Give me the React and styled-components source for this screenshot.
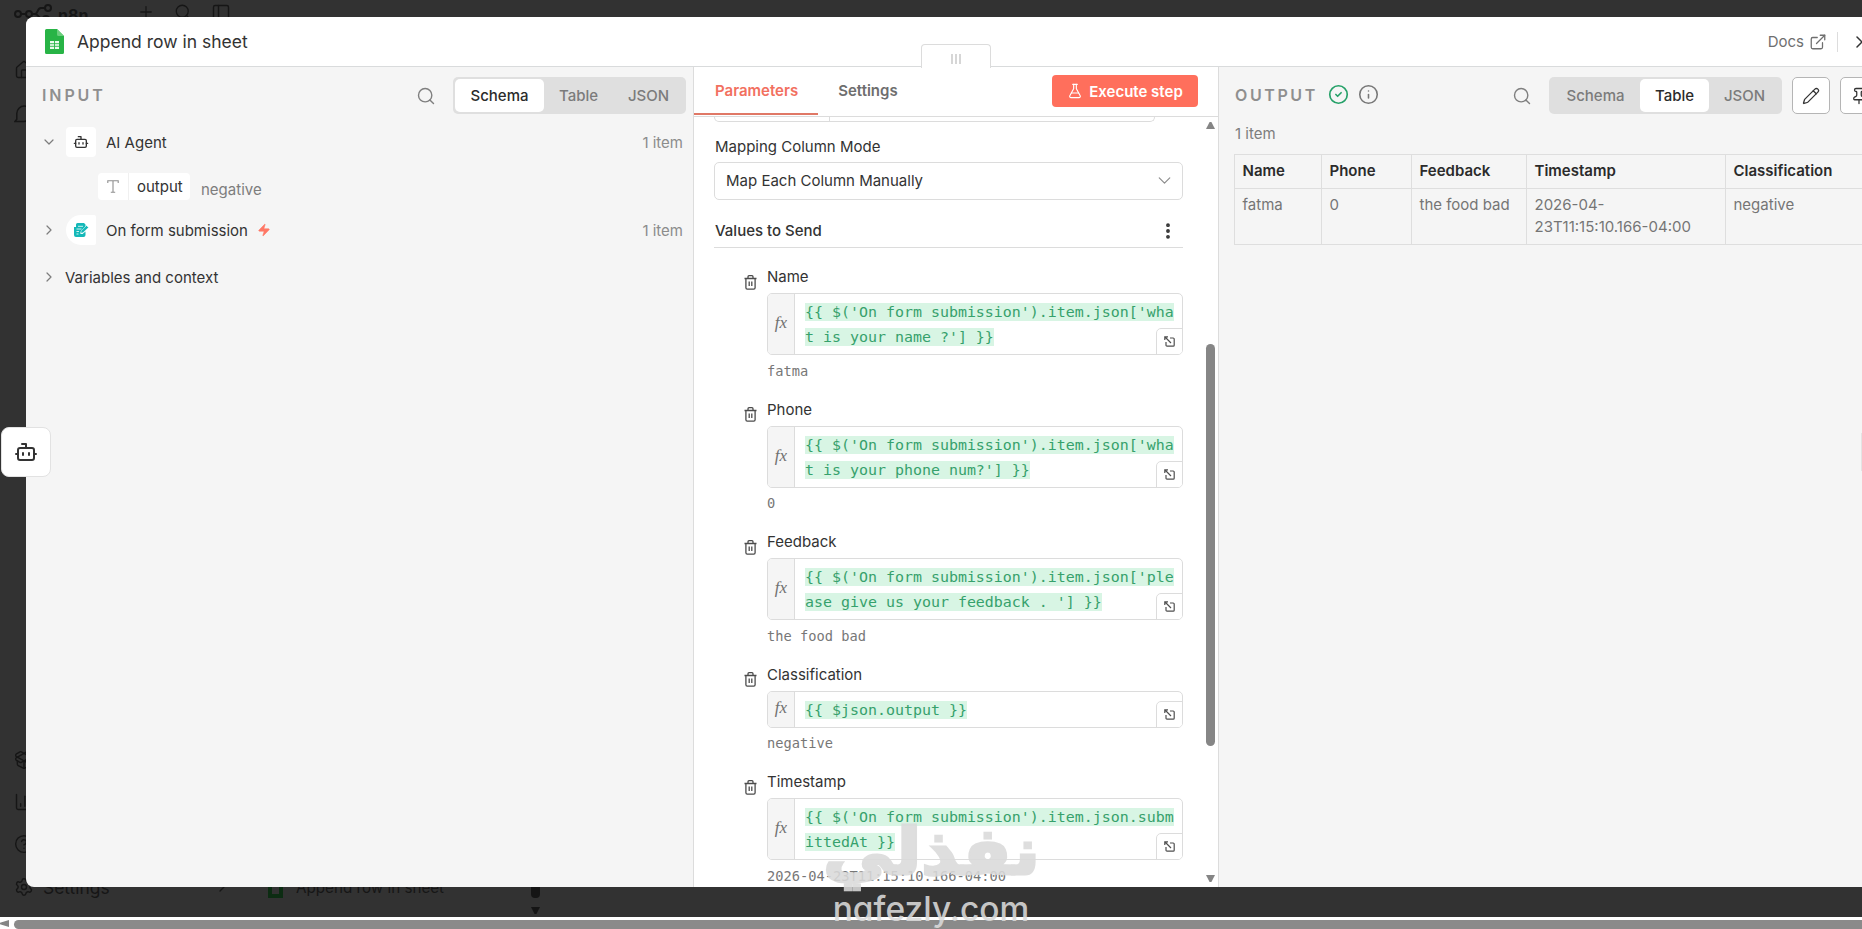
import React from "react";
import styled, { createGlobalStyle, css } from "styled-components";
import {
  Bot,
  ChartColumn,
  ChevronDown,
  ChevronRight,
  CircleCheck,
  CircleHelp,
  EllipsisVertical,
  ExternalLink,
  FlaskConical,
  House,
  Info,
  PackageOpen,
  PanelLeft,
  Pencil,
  Pin,
  Plus,
  Search,
  Settings,
  X,
  Zap,
} from "lucide-react";

const fields = [
  {
    name: "Name",
    lines: ["{{ $('On form submission').item.json['wha", "t is your name ?'] }}"],
    result: "fatma",
  },
  {
    name: "Phone",
    lines: ["{{ $('On form submission').item.json['wha", "t is your phone num?'] }}"],
    result: "0",
  },
  {
    name: "Feedback",
    lines: ["{{ $('On form submission').item.json['ple", "ase give us your feedback . '] }}"],
    result: "the food bad",
  },
  {
    name: "Classification",
    lines: ["{{ $json.output }}"],
    result: "negative",
  },
  {
    name: "Timestamp",
    lines: ["{{ $('On form submission').item.json.subm", "ittedAt }}"],
    result: "2026-04-23T11:15:10.166-04:00",
  },
];

const columns = [
  { title: "Name", value: "fatma", width: 87 },
  { title: "Phone", value: "0", width: 90 },
  { title: "Feedback", value: "the food bad", width: 115 },
  { title: "Timestamp", value: "2026-04-23T11:15:10.166-04:00", width: 199 },
  { title: "Classification", value: "negative", width: 150 },
];

function SheetIcon() {
  return (
    <svg width="19" height="25" viewBox="0 0 19 25">
      <path d="M1.5 0h10.500l7 7v16.500a1.500 1.500 0 0 1-1.500 1.500h-16A1.500 1.500 0 0 1 0 23.500v-22A1.500 1.500 0 0 1 1.500 0z" fill="#28b446" />
      <path d="M12 0l7 7h-5.500a1.500 1.500 0 0 1-1.500-1.500z" fill="#6ace7c" />
      <path d="M5 12h9v8H5z" fill="#eafaec" />
      <path d="M5 14.700h9M5 17.300h9M9.500 12v8" stroke="#28b446" strokeWidth="0.9" />
    </svg>
  );
}

function FormIcon() {
  return (
    <svg width="15" height="14" viewBox="0 0 15 14">
      <path d="M3.500 0H10l1.500 1.500v3L6.500 9.500V11h2l3-2.500V12a2 2 0 0 1-2 2H2a2 2 0 0 1-2-2V4h2V1.500A1.500 1.500 0 0 1 3.500 0z" fill="#14b8b8" />
      <path d="M4 3.300h5M2.500 6h5M2.500 8.500h2.500M2.500 11h2" stroke="#fff" strokeWidth="0.8" />
      <path d="M12.500 2.500l2 2L9 9.800l-2.200.4.300-2.200z" fill="#14b8b8" stroke="#fff" strokeWidth="0.5" />
    </svg>
  );
}

function TypeIcon() {
  return (
    <svg width="12" height="13" viewBox="0 0 12 13" fill="none" stroke="#8f8f8f" strokeWidth="1.1">
      <path d="M0.800 3V0.800h10.400V3M6 0.800v11.400M3.800 12.200h4.400" />
    </svg>
  );
}

function TrashIcon() {
  return (
    <svg width="13" height="15" viewBox="0 0 13 15" fill="none" stroke="#4c4c4c" strokeWidth="1.3">
      <path d="M0.500 3.500h12M4 3.300V1.700a1 1 0 0 1 1-1h3a1 1 0 0 1 1 1v1.600M1.900 3.500v9.300a1.300 1.300 0 0 0 1.300 1.300h6.600a1.300 1.300 0 0 0 1.300-1.300V3.500M5.200 6.500v4.500M7.800 6.500v4.500" />
    </svg>
  );
}

function ExpandIcon() {
  return (
    <svg width="11" height="11" viewBox="0 0 11 11" fill="none" stroke="#4f4f4f" strokeWidth="1.2">
      <path d="M6 2h3.200a1 1 0 0 1 1 1v6.200a1 1 0 0 1-1 1H3a1 1 0 0 1-1-1V6M0.800 4V0.800H4M1 1l6 6" />
    </svg>
  );
}

function ChatIcon() {
  return (
    <svg width="19" height="18" viewBox="0 0 19 18" fill="none" stroke="currentColor" strokeWidth="1.5">
      <path d="M1 16.500l1.800-2.300V8.500a7.500 7.500 0 0 1 15 0 7.800 7.800 0 0 1-7.800 8z" />
    </svg>
  );
}

function LogoIcon() {
  return (
    <svg width="40" height="18" viewBox="0 0 40 18" fill="none" stroke="#161616" strokeWidth="2">
      <circle cx="4" cy="10" r="3" />
      <circle cx="15" cy="10" r="3" />
      <circle cx="34" cy="4" r="3" />
      <circle cx="32" cy="15" r="3" />
      <path d="M7 10h5M18 10h3c3 0 2-6 6-6h4M21 10c4 0 3 5 8 5" />
    </svg>
  );
}

function Field({ name, lines, result }) {
  return (
    <FieldRow>
      <TrashIcon />
      <FieldBody>
        <FieldLabel>{name}</FieldLabel>
        <Expression>
          <FxBadge>fx</FxBadge>
          <Code>
            {lines.map((line) => (
              <CodeLine key={line}>
                <Mark>{line}</Mark>
              </CodeLine>
            ))}
          </Code>
          <ExpandButton>
            <ExpandIcon />
          </ExpandButton>
        </Expression>
        <Result>{result}</Result>
      </FieldBody>
    </FieldRow>
  );
}

function Views({ active }) {
  return (
    <Segmented>
      {["Schema", "Table", "JSON"].map((view) => (
        <Segment key={view} $active={view === active} $view={view}>
          {view}
        </Segment>
      ))}
    </Segmented>
  );
}

export default function App() {
  return (
    <Page>
      <GlobalStyle />
      <Backdrop>
        <TopBar>
          <LogoIcon />
          <Brand>n8n</Brand>
          <TopIcons>
            <Plus size={18} strokeWidth={1.7} />
            <Search size={18} strokeWidth={1.7} />
            <PanelLeft size={20} strokeWidth={1.7} />
          </TopIcons>
        </TopBar>
        <NavIcons>
          <House size={20} strokeWidth={1.7} />
          <ChatIcon />
        </NavIcons>
        <NavFooter>
          <PackageOpen size={20} strokeWidth={1.7} />
          <ChartColumn size={20} strokeWidth={1.7} />
          <CircleHelp size={20} strokeWidth={1.7} />
          <SettingsRow>
            <Settings size={20} strokeWidth={1.7} />
            <SettingsText>Settings</SettingsText>
            <ChevronRight size={16} />
            <DimSheet />
            <DimTitle>Append row in sheet</DimTitle>
            <DimScroll>
              <DimThumb />
              <Arrow $down $color="#151515" />
            </DimScroll>
          </SettingsRow>
        </NavFooter>
      </Backdrop>

      <Modal>
        <Header>
          <SheetIcon />
          <Title>Append row in sheet</Title>
          <Docs>
            Docs
            <ExternalLink size={18} strokeWidth={1.7} />
          </Docs>
          <HeaderLine />
          <X size={20} color="#333" strokeWidth={1.8} />
        </Header>
        <Panels>
          <InputPanel>
            <PanelBar>
              <PanelTitle>INPUT</PanelTitle>
              <Search size={20} color="#7f7f7f" strokeWidth={1.7} />
              <Views active="Schema" />
            </PanelBar>
            <Node $top={13}>
              <ChevronDown size={16} color="#7d7d7d" strokeWidth={1.8} />
              <NodeIcon>
                <Bot size={16} color="#333" strokeWidth={2} />
              </NodeIcon>
              <NodeName>AI Agent</NodeName>
              <Count>1 item</Count>
            </Node>
            <OutputRow>
              <Pill>
                <PillType>
                  <TypeIcon />
                </PillType>
                <PillName>output</PillName>
              </Pill>
              <PillValue>negative</PillValue>
            </OutputRow>
            <Node $top={14}>
              <ChevronRight size={16} color="#7d7d7d" strokeWidth={1.8} />
              <NodeIcon $trigger>
                <FormIcon />
              </NodeIcon>
              <NodeName>On form submission</NodeName>
              <Zap size={14} fill="#ff7866" color="#ff7866" strokeWidth={1} />
              <Count>1 item</Count>
            </Node>
            <Node $top={17}>
              <ChevronRight size={16} color="#7d7d7d" strokeWidth={1.8} />
              <ContextName>Variables and context</ContextName>
            </Node>
          </InputPanel>

          <MainPanel>
            <Grip>
              <GripLine />
              <GripLine />
              <GripLine />
            </Grip>
            <Tabs>
              <Tab $active>Parameters</Tab>
              <Tab>Settings</Tab>
              <Execute>
                <FlaskConical size={16} strokeWidth={1.7} />
                Execute step
              </Execute>
            </Tabs>
            <Scroller>
              <Form>
                <CutField>
                  <CutPart />
                </CutField>
                <ModeLabel>Mapping Column Mode</ModeLabel>
                <Select>
                  <span>Map Each Column Manually</span>
                  <ChevronDown size={21} color="#8d8d8d" strokeWidth={1.4} />
                </Select>
                <SectionTitle>
                  Values to Send
                  <EllipsisVertical size={20} strokeWidth={2.6} />
                </SectionTitle>
                <Fields>
                  {fields.map((field) => (
                    <Field key={field.name} {...field} />
                  ))}
                </Fields>
              </Form>
              <ScrollTrack>
                <Arrow $color="#858585" />
                <ScrollThumb />
                <Arrow $down $color="#858585" />
              </ScrollTrack>
            </Scroller>
          </MainPanel>

          <OutputPanel>
            <PanelBar>
              <PanelTitle $output>OUTPUT</PanelTitle>
              <Search size={20} color="#7f7f7f" strokeWidth={1.7} />
              <Status>
                <CircleCheck size={21} color="#26a169" strokeWidth={1.9} />
                <Info size={21} color="#777" strokeWidth={1.8} />
              </Status>
              <Views active="Table" />
              <IconButton>
                <Pencil size={18} strokeWidth={1.7} />
              </IconButton>
              <IconButton>
                <Pin size={18} strokeWidth={1.7} />
              </IconButton>
            </PanelBar>
            <OutputCount>1 item</OutputCount>
            <Table>
              {columns.map((column) => (
                <Column key={column.title} $width={column.width}>
                  <HeadCell>{column.title}</HeadCell>
                  <Cell>{column.value}</Cell>
                </Column>
              ))}
            </Table>
          </OutputPanel>
        </Panels>
      </Modal>

      <FloatingNode>
        <Bot size={24} strokeWidth={2} />
      </FloatingNode>
      <NextNode />

      <BottomScroll>
        <Arrow $left $color="#858585" />
        <BottomThumb />
      </BottomScroll>

      <Watermark>
        <WatermarkArabic>نفذلي</WatermarkArabic>
        <WatermarkLatin>nafezly.com</WatermarkLatin>
      </Watermark>
    </Page>
  );
}

const GlobalStyle = createGlobalStyle`
  * {
    box-sizing: border-box;
  }
  body {
    margin: 0;
    overflow: hidden;
    font-family: Inter, "Liberation Sans", sans-serif;
    font-size: 15px;
    color: #333;
  }
  svg {
    flex-shrink: 0;
    display: block;
  }
`;

const Page = styled.div`
  position: relative;
  width: 1862px;
  height: 929px;
  overflow: hidden;
  background: #323232;
`;

/* Dimmed editor behind the modal */

const Backdrop = styled.div`
  height: 917px;
  display: flex;
  flex-direction: column;
  padding-left: 14px;
  color: #161616;
`;

const TopBar = styled.div`
  height: 28px;
  display: flex;
  align-items: center;
  padding-bottom: 3px;
`;

const Brand = styled.div`
  width: 34px;
  font-size: 16px;
  font-weight: 700;
  padding: 4px 0 0 4px;
`;

const TopIcons = styled.div`
  display: flex;
  gap: 19px;
  padding-left: 49px;
`;

const NavIcons = styled.div`
  display: flex;
  flex-direction: column;
  gap: 25px;
  padding-top: 32px;
`;

const NavFooter = styled.div`
  display: flex;
  flex-direction: column;
  gap: 22px;
  margin-top: auto;
  height: 167px;
`;

const SettingsRow = styled.div`
  display: flex;
  height: 22px;
  align-items: center;
`;

const SettingsText = styled.div`
  width: 180px;
  padding-left: 9px;
  font-size: 17.4px;
`;

const DimSheet = styled.div`
  width: 15px;
  height: 22px;
  margin-left: 38px;
  border: 4px solid #0c2c12;
`;

const DimTitle = styled.div`
  width: 249px;
  padding-left: 13px;
  font-size: 15.2px;
`;

const DimScroll = styled.div`
  display: flex;
  flex-direction: column;
  gap: 9px;
  margin: 20px 0 0 -1px;
`;

const DimThumb = styled.div`
  width: 9px;
  height: 18px;
  border-radius: 4px;
  background: #151515;
`;

/* Modal */

const Modal = styled.div`
  position: absolute;
  left: 26px;
  top: 17px;
  width: 1836px;
  height: 870px;
  display: flex;
  flex-direction: column;
  background: #f5f5f5;
  border-radius: 8px 0 0 8px;
`;

const Header = styled.div`
  height: 50px;
  flex-shrink: 0;
  display: flex;
  align-items: center;
  padding-left: 19px;
  background: #fff;
  border-bottom: 1px solid #d9dbdc;
  border-radius: 8px 0 0 0;
`;

const Title = styled.div`
  flex: 1;
  padding-left: 13px;
  font-size: 17.5px;
`;

const Docs = styled.div`
  display: flex;
  align-items: center;
  gap: 5px;
  color: #6f6f6f;
`;

const HeaderLine = styled.div`
  width: 1px;
  height: 20px;
  margin: 0 14px 0 10px;
  background: #ddd;

  & + svg {
    margin-right: -10px;
  }
`;

const Panels = styled.div`
  flex: 1;
  min-height: 0;
  display: flex;
`;

const InputPanel = styled.div`
  width: 667px;
  padding: 10px 7px 0 16px;
`;

const PanelBar = styled.div`
  display: flex;
  align-items: center;
  height: 37px;
`;

const PanelTitle = styled.div`
  flex: 1;
  padding-bottom: 2px;
  font-size: 16px;
  font-weight: 600;
  letter-spacing: 2.9px;
  color: #8f8f8f;

  ${(props) =>
    props.$output &&
    css`
      flex: none;
      width: 93px;
      padding-bottom: 1px;
      letter-spacing: 2.6px;

      & + svg {
        order: 1;
        margin-left: auto;
      }
      & ~ div,
      & ~ button {
        order: 2;
      }
      & + svg + div {
        order: 0;
      }
    `}
`;

const Status = styled.div`
  display: flex;
  gap: 9px;
  padding-bottom: 2px;
`;

const Segmented = styled.div`
  display: flex;
  width: 233px;
  height: 37px;
  margin-left: 17px;
  padding: 2px;
  background: #dfdfdf;
  border-radius: 5px;
`;

const segmentWidths = { Schema: 89, Table: 69, JSON: 71 };

const Segment = styled.div`
  display: flex;
  align-items: center;
  justify-content: center;
  width: ${(props) => segmentWidths[props.$view]}px;
  font-weight: 500;
  color: ${(props) => (props.$active ? "#2b2b2b" : "#7b7b7b")};
  background: ${(props) => (props.$active ? "#fff" : "transparent")};
  border-radius: 5px;
`;

const IconButton = styled.button`
  display: flex;
  align-items: center;
  justify-content: center;
  flex-shrink: 0;
  width: 38px;
  height: 37px;
  padding: 0;
  margin-left: 10px;
  color: #333;
  background: #fff;
  border: 1px solid #b5b5b5;
  border-radius: 5px;
`;

const Node = styled.div`
  display: flex;
  align-items: center;
  height: 30px;
  margin-top: ${(props) => props.$top}px;
  margin-left: -1px;
`;

const NodeIcon = styled.div`
  display: flex;
  align-items: center;
  justify-content: center;
  width: 30px;
  height: 30px;
  margin-left: 9px;
  background: #fff;
  border-radius: ${(props) => (props.$trigger ? "15px 2px 2px 15px" : "4px")};
`;

const NodeName = styled.div`
  padding: 0 9px 0 10px;
`;

const ContextName = styled.div`
  padding-left: 8px;
`;

const Count = styled.div`
  margin-left: auto;
  padding-right: 3px;
  color: #8c8c8c;
`;

const OutputRow = styled.div`
  display: flex;
  height: 28px;
  margin: 16px 0 0 56px;
`;

const Pill = styled.div`
  display: flex;
  width: 92px;
  height: 27px;
  background: #fff;
  border-radius: 4px;
`;

const PillType = styled.div`
  display: flex;
  align-items: center;
  justify-content: center;
  width: 31px;
  border-right: 1px solid #f0f0f0;
`;

const PillName = styled.div`
  padding-left: 8px;
  line-height: 27px;
`;

const PillValue = styled.div`
  padding: 7px 0 0 11px;
  color: #7d7d7d;
`;

const MainPanel = styled.div`
  position: relative;
  width: 526px;
  display: flex;
  flex-direction: column;
  background: #fff;
  border: solid #dcdcdc;
  border-width: 0 1px;
`;

const Grip = styled.div`
  position: absolute;
  left: 227px;
  top: -23px;
  width: 70px;
  height: 24px;
  display: flex;
  justify-content: center;
  gap: 2px;
  padding-top: 9px;
  background: #fff;
  border: 1px solid #dcdcdc;
  border-bottom: 0;
  border-radius: 4px 4px 0 0;
`;

const GripLine = styled.div`
  width: 2px;
  height: 10px;
  background: #d6d6d6;
`;

const Tabs = styled.div`
  display: flex;
  height: 50px;
  flex-shrink: 0;
  border-bottom: 1px solid #dcdcdc;
`;

const Tab = styled.div`
  height: 48px;
  padding: 0 20px;
  line-height: 48px;
  font-weight: 600;
  color: ${(props) => (props.$active ? "#f2705f" : "#6e6e6e")};
  border-bottom: 2px solid ${(props) => (props.$active ? "#e07866" : "transparent")};

  &:first-child {
    padding-left: 21px;
  }
`;

const Execute = styled.button`
  display: flex;
  align-items: center;
  justify-content: center;
  gap: 6px;
  width: 146px;
  height: 32px;
  margin: 8px 20px 0 auto;
  padding: 0;
  font: 600 15px Inter, sans-serif;
  color: #fff;
  background: #ff6f5c;
  border: 0;
  border-radius: 4px;
`;

const Scroller = styled.div`
  flex: 1;
  min-height: 0;
  display: flex;
  overflow: hidden;
`;

const Form = styled.div`
  width: 509px;
  padding-left: 20px;
`;

const CutField = styled.div`
  width: 441px;
  height: 5px;
  border: 1px solid #dcdcdc;
  border-top: 0;
  border-radius: 0 0 5px 5px;
`;

const CutPart = styled.div`
  width: 115px;
  height: 4px;
  border-right: 1px solid #dcdcdc;
`;

const ModeLabel = styled.div`
  padding: 15px 0 0 1px;
  height: 40px;
  line-height: 20px;
`;

const Select = styled.div`
  display: flex;
  align-items: center;
  justify-content: space-between;
  width: 469px;
  height: 38px;
  padding: 0 7px 1px 11px;
  border: 1px solid #dcdcdc;
  border-radius: 5px;
`;

const SectionTitle = styled.div`
  display: flex;
  align-items: center;
  justify-content: space-between;
  width: 469px;
  height: 48px;
  padding: 14px 5px 0 1px;
  font-weight: 500;
  border-bottom: 1px solid #dcdcdc;
`;

const Fields = styled.div`
  display: flex;
  flex-direction: column;
  padding: 19px 0 0 30px;
`;

const FieldRow = styled.div`
  display: flex;
  gap: 10px;

  & > svg {
    margin-top: 7.5px;
  }
`;

const FieldBody = styled.div`
  width: 416px;
`;

const FieldLabel = styled.div`
  height: 26px;
  line-height: 20px;
`;

const Expression = styled.div`
  position: relative;
  display: flex;
  background: #fff;
  border: 1px solid #dcdcdc;
  border-radius: 5px;
  overflow: hidden;
`;

const FxBadge = styled.div`
  display: flex;
  align-items: center;
  justify-content: center;
  width: 27px;
  padding-bottom: 2px;
  font: italic 17px "Liberation Serif", serif;
  color: #707070;
  background: #f5f5f5;
  border-right: 1px solid #dcdcdc;
`;

const Code = styled.div`
  padding: 6px 0 4px 10px;
  font-family: "DejaVu Sans Mono", monospace;
  font-size: 14.95px;
`;

const CodeLine = styled.div`
  height: 25px;
  line-height: 25px;
  white-space: pre;
`;

const Mark = styled.span`
  color: #36a16c;
  background: #d8f5e4;
`;

const ExpandButton = styled.div`
  position: absolute;
  right: -1px;
  bottom: -1px;
  width: 27px;
  height: 27px;
  display: flex;
  align-items: center;
  justify-content: center;
  background: #fff;
  border: 1px solid #dcdcdc;
  border-radius: 5px 0 0 0;
`;

const Result = styled.div`
  height: 44.5px;
  padding-top: 5.5px;
  line-height: 20px;
  font-family: "DejaVu Sans Mono", monospace;
  font-size: 13.7px;
  color: #777;
`;

const ScrollTrack = styled.div`
  display: flex;
  flex-direction: column;
  align-items: center;
  padding: 5px 0;
  width: 15px;
`;

const ScrollThumb = styled.div`
  width: 9px;
  height: 402px;
  margin: 215px 0 129px;
  border-radius: 5px;
  background: #868686;
`;

const Arrow = styled.div`
  width: 9px;
  height: 7px;
  flex-shrink: 0;
  background: ${(props) => props.$color};
  clip-path: ${(props) => {
    if (props.$down) return "polygon(0 0, 100% 0, 60% 100%, 40% 100%)";
    if (props.$left) return "polygon(100% 0, 100% 100%, 0 60%, 0 40%)";
    return "polygon(40% 0, 60% 0, 100% 100%, 0 100%)";
  }};
`;

const OutputPanel = styled.div`
  width: 643px;
  padding: 10px 0 0 15px;
  overflow: hidden;

  & > ${PanelBar} {
    width: 643px;
    margin-left: 1px;
  }
`;

const OutputCount = styled.div`
  margin-top: 10px;
  height: 30px;
  padding-left: 1px;
  line-height: 20px;
  color: #7d7d7d;
`;

const Table = styled.div`
  display: flex;
  width: 642px;
  border: 1px solid #dedede;
`;

const Column = styled.div`
  flex: none;
  width: ${(props) => props.$width}px;
  border-right: 1px solid #dedede;
`;

const HeadCell = styled.div`
  height: 34px;
  padding: 0 7.5px;
  line-height: 32px;
  font-weight: 600;
  color: #2b2b2b;
  border-bottom: 1px solid #dedede;
`;

const Cell = styled.div`
  height: 55px;
  padding: 5px 12px 5px 7.5px;
  line-height: 22px;
  color: #757575;
`;

const FloatingNode = styled.div`
  position: absolute;
  left: 1px;
  top: 427px;
  width: 50px;
  height: 50px;
  display: flex;
  align-items: center;
  justify-content: center;
  background: #fff;
  border: 1px solid #e2e2e2;
  border-radius: 8px;
`;

const NextNode = styled.div`
  position: absolute;
  right: 0;
  top: 433px;
  width: 1px;
  height: 38px;
  background: #e4e4e4;
`;

const BottomScroll = styled.div`
  display: flex;
  height: 12px;
  padding-top: 3px;
  background: #fff;
`;

const BottomThumb = styled.div`
  flex: 1;
  margin-left: 5px;
  background: #8a8a8a;
  border-radius: 5px 0 0 5px;
`;

const Watermark = styled.div`
  position: absolute;
  left: 819px;
  top: 810px;
  width: 224px;
  height: 119px;
  display: flex;
  flex-direction: column;
  align-items: center;
  color: #dadada;
  opacity: 0.88;
  white-space: nowrap;
`;

const WatermarkArabic = styled.div`
  height: 78px;
  line-height: 84px;
  font-family: "DejaVu Sans", sans-serif;
  font-weight: 700;
  font-size: 65px;
  transform: scaleX(1.09);
  -webkit-text-stroke: 3px #dadada;
  paint-order: stroke fill;
`;

const WatermarkLatin = styled.div`
  height: 40px;
  line-height: 42px;
  font-size: 33.5px;
  font-weight: 500;
  font-feature-settings: "cv11";
`;
